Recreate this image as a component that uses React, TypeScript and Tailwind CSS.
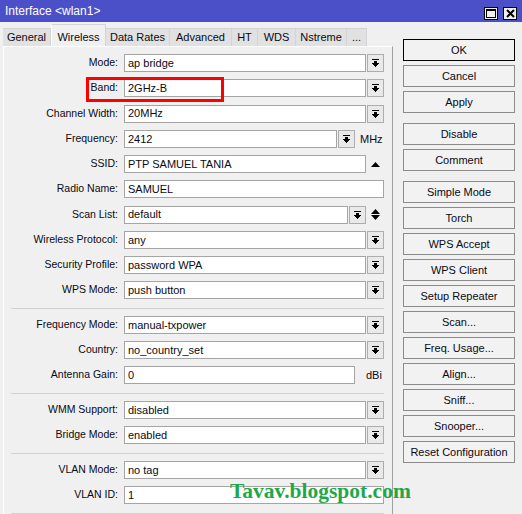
import React from "react";

type Row = {
  label: string;
  value: string;
  kind: "select" | "text";
  trail?: "up" | "updown" | "MHz" | "dBi";
};

const sections: Row[][] = [
  [
    { label: "Mode:", value: "ap bridge", kind: "select" },
    { label: "Band:", value: "2GHz-B", kind: "select" },
    { label: "Channel Width:", value: "20MHz", kind: "select" },
    { label: "Frequency:", value: "2412", kind: "select", trail: "MHz" },
    { label: "SSID:", value: "PTP SAMUEL TANIA", kind: "text", trail: "up" },
    { label: "Radio Name:", value: "SAMUEL", kind: "text" },
    { label: "Scan List:", value: "default", kind: "select", trail: "updown" },
    { label: "Wireless Protocol:", value: "any", kind: "select" },
    { label: "Security Profile:", value: "password WPA", kind: "select" },
    { label: "WPS Mode:", value: "push button", kind: "select" },
  ],
  [
    { label: "Frequency Mode:", value: "manual-txpower", kind: "select" },
    { label: "Country:", value: "no_country_set", kind: "select" },
    { label: "Antenna Gain:", value: "0", kind: "text", trail: "dBi" },
  ],
  [
    { label: "WMM Support:", value: "disabled", kind: "select" },
    { label: "Bridge Mode:", value: "enabled", kind: "select" },
  ],
  [
    { label: "VLAN Mode:", value: "no tag", kind: "select" },
    { label: "VLAN ID:", value: "1", kind: "text" },
  ],
];

const tabs = [
  { name: "General", w: "w-[48px]" },
  { name: "Wireless", w: "w-[55px]", active: true },
  { name: "Data Rates", w: "w-[64px]" },
  { name: "Advanced", w: "w-[62px]" },
  { name: "HT", w: "w-[26px]" },
  { name: "WDS", w: "w-[38px]" },
  { name: "Nstreme", w: "w-[51px]" },
  { name: "...", w: "w-[20px]" },
];

const buttonGroups = [
  ["OK", "Cancel", "Apply"],
  ["Disable", "Comment"],
  [
    "Simple Mode",
    "Torch",
    "WPS Accept",
    "WPS Client",
    "Setup Repeater",
    "Scan...",
    "Freq. Usage...",
    "Align...",
    "Sniff...",
    "Snooper...",
    "Reset Configuration",
  ],
];

function DropIcon() {
  return (
    <svg width="7" height="8" viewBox="0 0 7 8" shapeRendering="crispEdges">
      <rect x="0" y="0" width="7" height="1" fill="#000" />
      <rect x="2" y="2" width="3" height="2" fill="#000" />
      <rect x="0" y="4" width="7" height="1" fill="#000" />
      <rect x="1" y="5" width="5" height="1" fill="#000" />
      <rect x="2" y="6" width="3" height="1" fill="#000" />
      <rect x="3" y="7" width="1" height="1" fill="#000" />
    </svg>
  );
}

function UpTri() {
  return (
    <svg width="9" height="5" viewBox="0 0 9 5">
      <path d="M0 5 L4.5 0 L9 5 Z" fill="#000" />
    </svg>
  );
}

function DownTri() {
  return (
    <svg width="9" height="5" viewBox="0 0 9 5">
      <path d="M0 0 L9 0 L4.5 5 Z" fill="#000" />
    </svg>
  );
}

function DropButton() {
  return (
    <div className="ml-px flex h-[18px] w-[17px] shrink-0 items-center justify-center border border-[#adadad] bg-[#e9e9e9]">
      <DropIcon />
    </div>
  );
}

function Field({ row }: { row: Row }) {
  return (
    <div className="flex h-[18px] items-center">
      <div className="w-[114px] shrink-0 text-right text-[10.5px]">{row.label}</div>
      <div className="ml-[6px] flex w-[260px] items-center">
        <div className="flex h-[18px] min-w-0 flex-1 items-center border border-[#a5a5a5] bg-white pl-[3px]">
          {row.value}
        </div>
        {row.kind === "select" && <DropButton />}
        {row.trail === "up" && (
          <div className="flex w-[18px] justify-center">
            <UpTri />
          </div>
        )}
        {row.trail === "updown" && (
          <div className="flex w-[18px] flex-col items-center gap-[1px]">
            <UpTri />
            <DownTri />
          </div>
        )}
        {row.trail === "MHz" && <div className="w-[29px] pl-[5px]">MHz</div>}
        {row.trail === "dBi" && <div className="w-[29px] pl-[11px]">dBi</div>}
      </div>
    </div>
  );
}

export default function App() {
  return (
    <div className="relative h-[514px] w-[522px] overflow-hidden bg-[#f0f0f0] font-['Liberation_Sans',Arial,sans-serif] text-[11px] text-[#0a0a14]">
      {/* title bar */}
      <div className="flex h-[22px] items-center bg-[#4c50c8] pl-[5px] pr-[5px] text-white">
        <span className="text-[12px]">Interface &lt;wlan1&gt;</span>
        <div className="ml-auto flex gap-[5px] pt-[4px]">
          <div className="flex h-[13px] w-[14px] items-center justify-center border border-black bg-[#f0f0f0]">
            <div className="h-[9px] w-[10px] border border-t-2 border-black" />
          </div>
          <div className="flex h-[13px] w-[14px] items-center justify-center border border-black bg-[#f0f0f0]">
            <svg width="9" height="9" viewBox="0 0 9 9">
              <path d="M1 1 L8 8 M8 1 L1 8" stroke="#000" strokeWidth="2" />
            </svg>
          </div>
        </div>
      </div>

      <div className="flex">
        {/* tabs + panel */}
        <div className="ml-[3px] flex w-[390px] flex-col">
          <div className="flex h-[24px] items-end">
            {tabs.map((t) =>
              t.active ? (
                <div
                  key={t.name}
                  className={`${t.w} -mb-px flex h-[23px] items-start justify-center border border-b-0 border-[#d4d4d4] border-l-white bg-[#f0f0f0] pt-[4px]`}
                >
                  {t.name}
                </div>
              ) : (
                <div
                  key={t.name}
                  className={`${t.w} flex h-[18px] items-center justify-center border-r border-t border-[#d4d4d4] bg-[#e1e1e1]`}
                >
                  {t.name}
                </div>
              )
            )}
          </div>
          <div className="h-[468px] border-l border-r border-t border-l-white border-r-[#a0a0a0] border-t-white pt-[7px]">
            {sections.map((sec, i) => (
              <div key={i}>
                {i > 0 && <div className="mb-[7px] ml-[7px] mt-[9px] h-px w-[373px] bg-[#d2d2d2]" />}
                <div className={`flex flex-col ${i === 0 ? "gap-[7.25px]" : "gap-[7px]"}`}>
                  {sec.map((r) => (
                    <Field key={r.label} row={r} />
                  ))}
                </div>
              </div>
            ))}
            <div className="ml-[7px] mt-[9px] h-px w-[373px] bg-[#d2d2d2]" />
          </div>
        </div>

        {/* buttons */}
        <div className="ml-[10px] mt-[17px] flex w-[112px] flex-col gap-[10px]">
          {buttonGroups.map((g, gi) => (
            <div key={gi} className="flex flex-col gap-[4px]">
              {g.map((b) => (
                <div
                  key={b}
                  className={`flex h-[22px] items-center justify-center border bg-[#f2f2f2] ${
                    b === "OK" ? "border-black" : "border-[#8c8c8c]"
                  }`}
                >
                  {b}
                </div>
              ))}
            </div>
          ))}
        </div>
      </div>

      {/* highlight box */}
      <div className="absolute left-[86px] top-[77px] h-[25px] w-[138px] border-[3px] border-[#ff0000]" />

      {/* watermark */}
      <div className="absolute left-[230px] top-[475px] font-['Liberation_Serif',serif] text-[21.5px] font-bold text-[#1fa84a]">
        Tavav.blogspot.com
      </div>
    </div>
  );
}
